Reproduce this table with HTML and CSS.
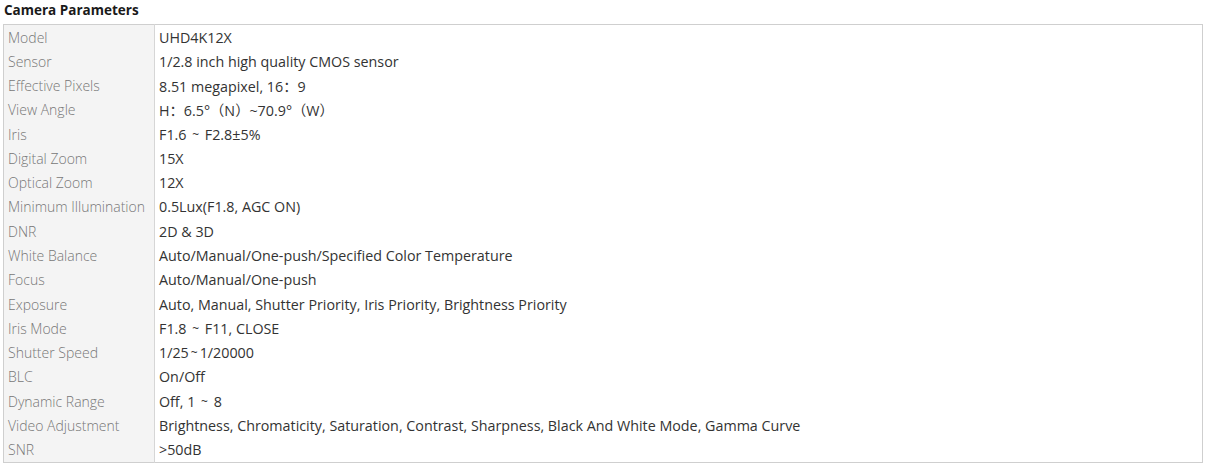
FILE: index.html
```html
<!DOCTYPE html>
<html>
<head>
<meta charset="utf-8">
<link rel="stylesheet" href="styles.css">
</head>
<body>
<h3 class="title">Camera Parameters</h3>
<table class="spec">
<tr><td class="k">Model</td><td class="v">UHD4K12X</td></tr>
<tr><td class="k">Sensor</td><td class="v">1/2.8 inch high quality CMOS sensor</td></tr>
<tr><td class="k">Effective Pixels</td><td class="v">8.51 megapixel, 16：9</td></tr>
<tr><td class="k">View Angle</td><td class="v">H：6.5°（N）~70.9°（W）</td></tr>
<tr><td class="k">Iris</td><td class="v">F1.6 <span class="t">~</span> F2.8±5%</td></tr>
<tr><td class="k">Digital Zoom</td><td class="v">15X</td></tr>
<tr><td class="k">Optical Zoom</td><td class="v">12X</td></tr>
<tr><td class="k">Minimum Illumination</td><td class="v">0.5Lux(F1.8, AGC ON)</td></tr>
<tr><td class="k">DNR</td><td class="v">2D &amp; 3D</td></tr>
<tr><td class="k">White Balance</td><td class="v">Auto/Manual/One-push/Specified Color Temperature</td></tr>
<tr><td class="k">Focus</td><td class="v">Auto/Manual/One-push</td></tr>
<tr><td class="k">Exposure</td><td class="v">Auto, Manual, Shutter Priority, Iris Priority, Brightness Priority</td></tr>
<tr><td class="k">Iris Mode</td><td class="v">F1.8 <span class="t">~</span> F11, CLOSE</td></tr>
<tr><td class="k">Shutter Speed</td><td class="v">1/25<span class="t">~</span>1/20000</td></tr>
<tr><td class="k">BLC</td><td class="v">On/Off</td></tr>
<tr><td class="k">Dynamic Range</td><td class="v">Off, 1 <span class="t">~</span> 8</td></tr>
<tr><td class="k">Video Adjustment</td><td class="v">Brightness, Chromaticity, Saturation, Contrast, Sharpness, Black And White Mode, Gamma Curve</td></tr>
<tr><td class="k">SNR</td><td class="v">&gt;50dB</td></tr>
</table>
</body>
</html>
```
FILE: styles.css
```css
body {
  margin: 0;
  font-family: "Open Sans", "Noto Sans CJK SC", sans-serif;
  background: #fff;
}
.title {
  margin: 0;
  padding: 0 0 0 4px;
  height: 23px;
  line-height: 20px;
  font-size: 13.5px;
  font-weight: 700;
  color: #1a1a1a;
}
.spec {
  margin: 1px 0 0 3px;
  width: 1200px;
  border-collapse: collapse;
  border: 1px solid #cfcfcf;
  font-size: 14.3px;
}
.spec td {
  height: 24.28px;
  padding: 0 3px 0 4px;
  vertical-align: middle;
  white-space: nowrap;
}
.spec .k {
  width: 143px;
  background: #f4f4f4;
  color: #777;
  font-weight: 300;
  font-size: 14px;
  border-right: 1px solid #d6d6d6;
}
.spec .v {
  padding-left: 4px;
  color: #333;
}
.t {
  display: inline-block;
  padding: 0 2px;
  font-size: 12px;
  vertical-align: 1px;
}
```
